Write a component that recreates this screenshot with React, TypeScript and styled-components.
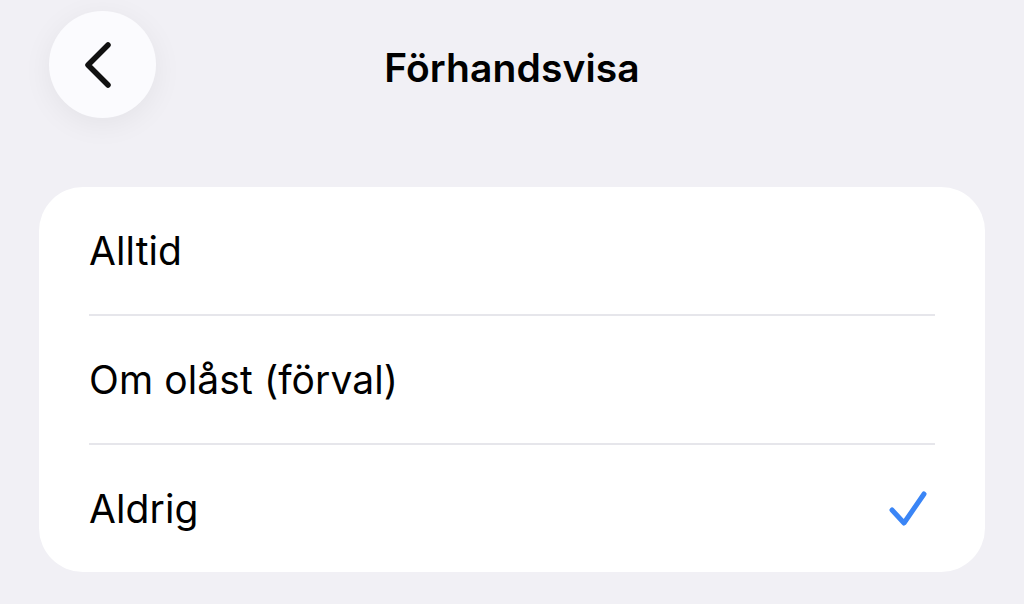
import React from "react";
import styled, { createGlobalStyle } from "styled-components";

const Global = createGlobalStyle`
  html, body { margin: 0; padding: 0; background: #f1f0f5; }
  body { font-family: Inter, "Noto Sans", sans-serif; -webkit-font-smoothing: antialiased; }
`;

const Page = styled.div`
  width: 1024px;
  height: 604px;
  background: #f1f0f5;
  display: flex;
  flex-direction: column;
  overflow: hidden;
`;

const Header = styled.header`
  position: relative;
  height: 130px;
  display: flex;
  align-items: center;
  justify-content: center;
`;

const BackButton = styled.button`
  position: absolute;
  left: 49px;
  top: 11px;
  width: 107px;
  height: 107px;
  border-radius: 50%;
  border: none;
  background: #fbfbfe;
  box-shadow: 0 6px 30px rgba(0, 0, 0, 0.06);
  display: flex;
  align-items: center;
  justify-content: center;
  padding: 0;
`;

const Title = styled.h1`
  margin: 0;
  margin-top: 4px;
  font-size: 39px;
  font-weight: 600;
  color: #000;
  letter-spacing: 0.1px;
`;

const Card = styled.section`
  margin: 57px 39px 0 39px;
  background: #fff;
  border-radius: 44px;
  display: flex;
  flex-direction: column;
`;

const Row = styled.div<{ $last?: boolean }>`
  height: 127px;
  margin: 0 50px;
  display: flex;
  align-items: center;
  justify-content: space-between;
  border-bottom: ${(p) => (p.$last ? "none" : "2px solid #e6e6eb")};
`;

const Label = styled.span`
  font-size: 39px;
  font-weight: 400;
  color: #000;
  letter-spacing: 0.1px;
`;

const Check = () => (
  <svg width="44" height="44" viewBox="0 0 44 44" style={{ marginRight: 3 }}>
    <path d="M4 23 L16 36 L36 7" fill="none" stroke="#3a85f6" strokeWidth="5" strokeLinecap="round" strokeLinejoin="round" />
  </svg>
);

export default function App() {
  const items = ["Alltid", "Om olåst (förval)", "Aldrig"];
  return (
    <Page>
      <Global />
      <Header>
        <BackButton aria-label="Tillbaka">
          <svg width="40" height="50" viewBox="0 0 40 50">
            <path d="M25 5 L5 25 L25 45" fill="none" stroke="#111" strokeWidth="5.5" strokeLinecap="round" strokeLinejoin="round" />
          </svg>
        </BackButton>
        <Title>Förhandsvisa</Title>
      </Header>
      <Card>
        {items.map((t, i) => (
          <Row key={t} $last={i === items.length - 1}>
            <Label>{t}</Label>
            {i === 2 && <Check />}
          </Row>
        ))}
      </Card>
    </Page>
  );
}
